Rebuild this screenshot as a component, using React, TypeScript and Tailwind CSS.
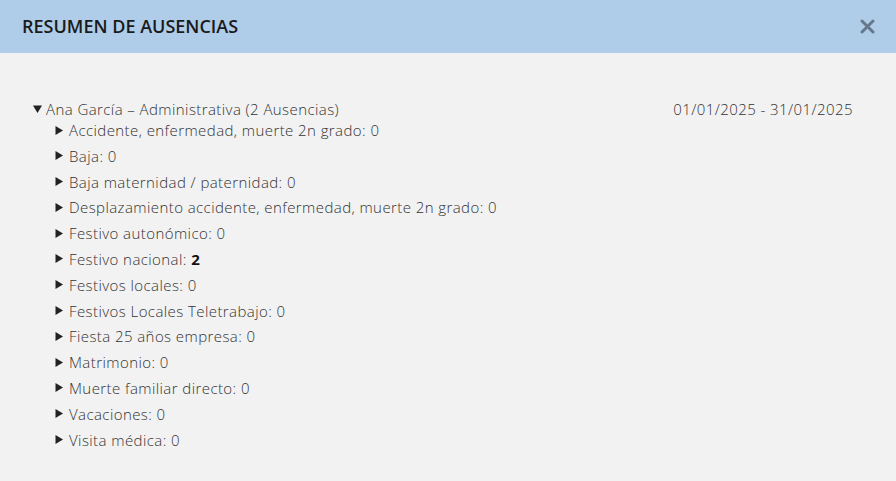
import React from 'react';

const tipos: { label: string; count: number }[] = [
  { label: 'Accidente, enfermedad, muerte 2n grado', count: 0 },
  { label: 'Baja', count: 0 },
  { label: 'Baja maternidad / paternidad', count: 0 },
  { label: 'Desplazamiento accidente, enfermedad, muerte 2n grado', count: 0 },
  { label: 'Festivo autonómico', count: 0 },
  { label: 'Festivo nacional', count: 2 },
  { label: 'Festivos locales', count: 0 },
  { label: 'Festivos Locales Teletrabajo', count: 0 },
  { label: 'Fiesta 25 años empresa', count: 0 },
  { label: 'Matrimonio', count: 0 },
  { label: 'Muerte familiar directo', count: 0 },
  { label: 'Vacaciones', count: 0 },
  { label: 'Visita médica', count: 0 },
];

function Caret({ open }: { open?: boolean }) {
  return open ? (
    <svg width="9" height="8" viewBox="0 0 9 8" className="shrink-0">
      <path d="M0 0.5 H9 L4.5 8 Z" fill="#222" />
    </svg>
  ) : (
    <svg width="8" height="9" viewBox="0 0 8 9" className="shrink-0">
      <path d="M0.5 0 V9 L8 4.5 Z" fill="#222" />
    </svg>
  );
}

export default function App() {
  return (
    <div
      className="w-[896px] h-[481px] bg-[#f2f2f2] flex flex-col"
      style={{ fontFamily: '"Open Sans", "Noto Sans", sans-serif' }}
    >
      <div className="h-[53px] bg-[#afcde9] flex items-center justify-between pl-[22px] pr-[21px] shrink-0">
        <div className="text-[18px] font-semibold text-[#1a1a1a]">RESUMEN DE AUSENCIAS</div>
        <button className="w-[16px] h-[16px] flex items-center justify-center">
          <svg width="15" height="15" viewBox="0 0 15 15">
            <path d="M2 2 L13 13 M13 2 L2 13" stroke="#66788a" strokeWidth="3" strokeLinecap="round" />
          </svg>
        </button>
      </div>

      <div className="pt-[46px] pl-[33px] pr-[43px] text-[15px] font-light text-[#333] tracking-[0.42px]">
        <div className="flex items-center justify-between leading-[20px]">
          <div className="flex items-center gap-[4px]">
            <Caret open />
            <span>Ana García – Administrativa (2 Ausencias)</span>
          </div>
          <span>01/01/2025 - 31/01/2025</span>
        </div>
        <ul className="mt-[1px] pl-[22px] flex flex-col gap-[5.8px]">
          {tipos.map((t) => (
            <li key={t.label} className="flex items-center gap-[6px] leading-[20px]">
              <Caret />
              <span>
                {t.label}:{' '}
                {t.count > 0 ? <b className="font-bold text-[#111]">{t.count}</b> : t.count}
              </span>
            </li>
          ))}
        </ul>
      </div>
    </div>
  );
}
